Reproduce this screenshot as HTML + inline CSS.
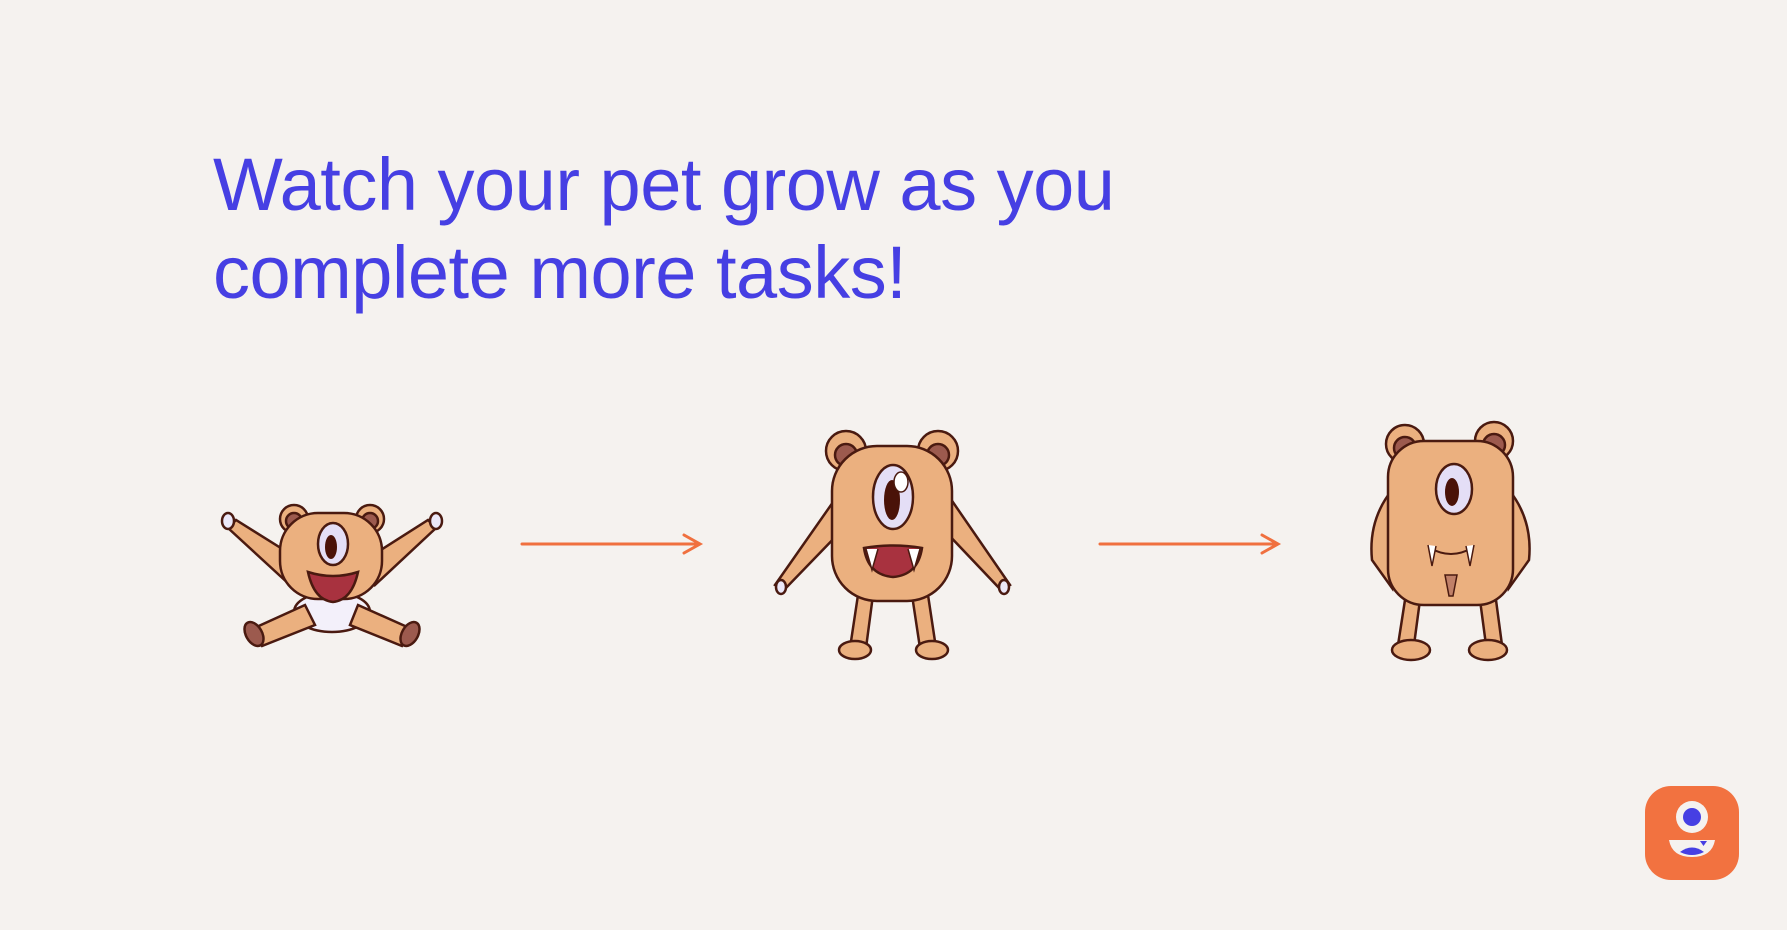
<!DOCTYPE html>
<html><head><meta charset="utf-8"><style>
html,body{margin:0;padding:0;background:#f5f2ef;width:1787px;height:930px;overflow:hidden}
h1{position:absolute;left:213px;top:141px;margin:0;font-family:"Liberation Sans",sans-serif;font-weight:400;font-size:74px;line-height:88px;color:#463fe3;letter-spacing:-0.5px}
svg{position:absolute;left:0;top:0}
</style></head><body>
<h1>Watch your pet grow as you<br>complete more tasks!</h1>
<svg width="1787" height="930" viewBox="0 0 1787 930">
<g stroke="#f0703f" stroke-width="3" fill="none" stroke-linecap="round">
<path d="M522 544H700M684 535L700 544L684 553"/>
<path d="M1100 544H1278M1262 535L1278 544L1262 553"/>
</g>
<g stroke="#4a1a10" stroke-width="2.5" fill="#ebb07f">
<path d="M300 560L236 520L228 528L290 585Z"/>
<path d="M365 560L428 520L436 528L375 585Z"/>
<ellipse cx="228" cy="521" rx="6" ry="8" fill="#ece8f8"/>
<ellipse cx="436" cy="521" rx="6" ry="8" fill="#ece8f8"/>
<ellipse cx="332" cy="612" rx="38" ry="20" fill="#f3f0fa"/>
<path d="M305 605L250 630L262 646L315 625Z"/>
<path d="M358 605L414 630L402 646L350 625Z"/>
<ellipse cx="254" cy="634" rx="8" ry="13" fill="#9c5a4e" transform="rotate(-30 254 634)"/>
<ellipse cx="410" cy="634" rx="8" ry="13" fill="#9c5a4e" transform="rotate(30 410 634)"/>
<circle cx="294" cy="519" r="14"/><circle cx="294" cy="521" r="8" fill="#9c5a4e"/>
<circle cx="370" cy="519" r="14"/><circle cx="370" cy="521" r="8" fill="#9c5a4e"/>
<rect x="280" y="513" width="102" height="86" rx="38"/>
<ellipse cx="333" cy="544" rx="15" ry="21" fill="#e4def6"/>
<ellipse cx="331" cy="547" rx="6" ry="12" fill="#4a1208" stroke="none"/>
<path d="M308 572Q333 580 358 572Q352 600 333 602Q314 600 308 572Z" fill="#a8323f"/>
<path d="M838 495L775 585L784 590L842 530Z"/>
<path d="M948 495L1010 585L1001 590L944 530Z"/>
<ellipse cx="781" cy="587" rx="5" ry="7" fill="#ece8f8"/>
<ellipse cx="1004" cy="587" rx="5" ry="7" fill="#ece8f8"/>
<path d="M858 595L850 648L866 648L873 595Z"/>
<path d="M912 595L920 648L936 648L928 595Z"/>
<ellipse cx="855" cy="650" rx="16" ry="9"/>
<ellipse cx="932" cy="650" rx="16" ry="9"/>
<circle cx="846" cy="451" r="20"/><circle cx="846" cy="455" r="11" fill="#9c5a4e"/>
<circle cx="938" cy="451" r="20"/><circle cx="938" cy="455" r="11" fill="#9c5a4e"/>
<rect x="832" y="446" width="120" height="155" rx="45"/>
<ellipse cx="893" cy="497" rx="20" ry="32" fill="#e4def6"/>
<ellipse cx="892" cy="500" rx="8" ry="20" fill="#4a1208" stroke="none"/>
<ellipse cx="901" cy="482" rx="7" ry="10" fill="#fff" stroke-width="1.5"/>
<path d="M864 548Q893 543 922 548Q918 575 893 577Q868 575 864 548Z" fill="#a8323f"/>
<path d="M866 549L872 570L878 549M908 549L914 570L920 549" fill="#fff" stroke-width="1.5"/>
<path d="M1392 490Q1368 520 1372 560L1392 588Z"/>
<path d="M1509 490Q1533 520 1529 560L1509 588Z"/>
<path d="M1405 600L1398 645L1414 645L1420 600Z"/>
<path d="M1480 600L1486 645L1502 645L1496 600Z"/>
<ellipse cx="1411" cy="650" rx="19" ry="10"/>
<ellipse cx="1488" cy="650" rx="19" ry="10"/>
<circle cx="1405" cy="444" r="19"/><circle cx="1405" cy="448" r="11" fill="#9c5a4e"/>
<circle cx="1494" cy="441" r="19"/><circle cx="1494" cy="445" r="11" fill="#9c5a4e"/>
<rect x="1388" y="441" width="125" height="164" rx="36"/>
<ellipse cx="1454" cy="489" rx="18" ry="25" fill="#e4def6"/>
<ellipse cx="1452" cy="492" rx="7" ry="14" fill="#4a1208" stroke="none"/>
<path d="M1430 548Q1451 560 1472 548" fill="none" stroke-width="2"/>
<path d="M1428 545L1432 566L1436 546M1466 546L1470 566L1474 545" fill="#fff" stroke-width="1.5"/>
<path d="M1445 575H1457L1453 596H1449Z" fill="#c08068" stroke-width="1.5"/>
</g>
<rect x="1645" y="786" width="94" height="94" rx="26" fill="#f27240"/>
<circle cx="1692" cy="817" r="16" fill="#f5f2ef"/>
<circle cx="1692" cy="817" r="9" fill="#463fe3"/>
<path d="M1669 840H1715Q1712 857 1692 857Q1672 857 1669 840Z" fill="#f5f2ef"/>
<path d="M1680 852Q1692 843 1704 852Q1692 858 1680 852Z" fill="#463fe3"/>
<path d="M1700 841H1707L1703.5 846Z" fill="#463fe3"/>
</svg>
</body></html>
